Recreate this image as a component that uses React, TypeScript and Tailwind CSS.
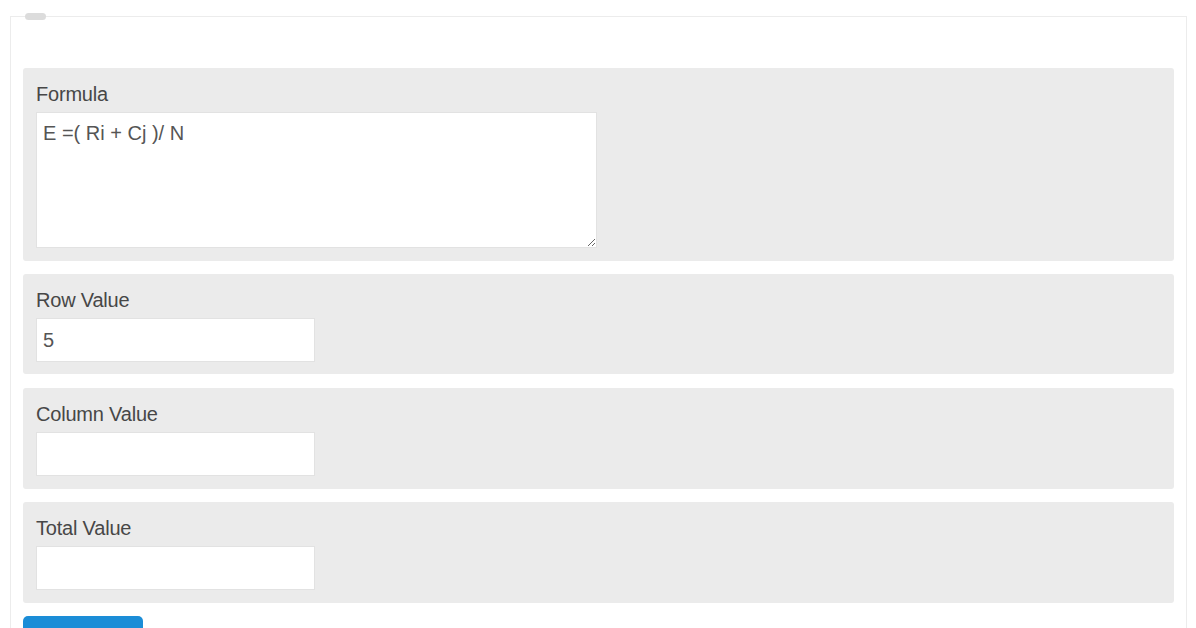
import React from "react";

function Field({ label, value, pb, mb }: { label: string; value?: string; pb: string; mb: string }) {
  return (
    <div className={`bg-[#ebebeb] rounded-[3px] pt-[14px] px-[13px] ${pb} ${mb}`}>
      <div className="text-[20px] leading-[24px] text-[#474747] tracking-[-0.2px] mb-[6px]">{label}</div>
      <input
        readOnly
        value={value ?? ""}
        className="block w-[279px] h-[44px] bg-white border border-[#e2e2e2] px-[6px] text-[20px] text-[#555] outline-none"
        style={{ fontFamily: '"Liberation Sans", Arial, sans-serif' }}
      />
    </div>
  );
}

export default function App() {
  return (
    <div
      className="w-[1196px] h-[628px] bg-white overflow-hidden"
      style={{ fontFamily: '"Liberation Sans", Arial, sans-serif' }}
    >
      <div className="relative ml-[10px] mt-[16px] w-[1177px] border border-[#ececec] pt-[51px] px-[12px]">
        <div className="absolute left-[14px] top-[-4px] w-[21px] h-[7px] rounded-full bg-[#dcdcdc]" />
        <div className="bg-[#ebebeb] rounded-[3px] pt-[14px] px-[13px] pb-[13px] mb-[13px]">
          <div className="text-[20px] leading-[24px] text-[#474747] tracking-[-0.2px] mb-[6px]">Formula</div>
          <textarea
            readOnly
            value="E =( Ri + Cj )/ N"
            className="block w-[561px] h-[136px] bg-white border border-[#e2e2e2] pt-[8px] px-[6px] text-[20px] leading-[24px] text-[#555] outline-none"
            style={{ fontFamily: '"Liberation Sans", Arial, sans-serif' }}
          />
        </div>
        <Field label="Row Value" value="5" pb="pb-[12px]" mb="mb-[14px]" />
        <Field label="Column Value" pb="pb-[13px]" mb="mb-[13px]" />
        <Field label="Total Value" pb="pb-[13px]" mb="mb-[13px]" />
        <button className="block w-[120px] h-[40px] rounded-[5px] bg-[#1b8dd7]" />
      </div>
    </div>
  );
}
